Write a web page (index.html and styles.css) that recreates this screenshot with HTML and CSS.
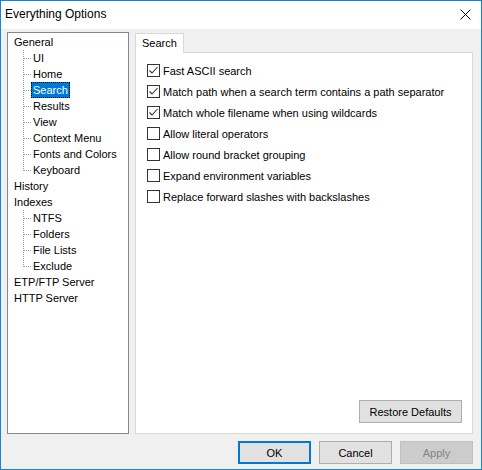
FILE: index.html
```html
<!DOCTYPE html>
<html>
<head>
<meta charset="utf-8">
<title>Everything Options</title>
<link rel="stylesheet" href="styles.css">
</head>
<body>
<div class="window">
  <div class="titlebar">
    <span class="title">Everything Options</span>
    <svg class="close" width="12" height="12" viewBox="0 0 12 12"><path d="M0.5 0.5 L10.5 10.5 M10.5 0.5 L0.5 10.5" stroke="#000" stroke-width="1" fill="none"/></svg>
  </div>
  <div class="client">
    <div class="main">
      <div class="tree">
        <div class="item root"><span>General</span></div>
        <div class="item child"><span>UI</span></div>
        <div class="item child"><span>Home</span></div>
        <div class="item child"><span class="sel">Search</span></div>
        <div class="item child"><span>Results</span></div>
        <div class="item child"><span>View</span></div>
        <div class="item child"><span>Context Menu</span></div>
        <div class="item child"><span>Fonts and Colors</span></div>
        <div class="item child last"><span>Keyboard</span></div>
        <div class="item root"><span>History</span></div>
        <div class="item root"><span>Indexes</span></div>
        <div class="item child"><span>NTFS</span></div>
        <div class="item child"><span>Folders</span></div>
        <div class="item child"><span>File Lists</span></div>
        <div class="item child last"><span>Exclude</span></div>
        <div class="item root"><span>ETP/FTP Server</span></div>
        <div class="item root"><span>HTTP Server</span></div>
      </div>
      <div class="right">
        <div class="tab">Search</div>
        <div class="panel">
          <div class="options">
            <label class="opt"><span class="box checked"><svg width="11" height="11" viewBox="0 0 11 11"><path d="M1.5 5.5 L4 8 L9.5 2" stroke="#333" stroke-width="1.1" fill="none"/></svg></span>Fast ASCII search</label>
            <label class="opt"><span class="box checked"><svg width="11" height="11" viewBox="0 0 11 11"><path d="M1.5 5.5 L4 8 L9.5 2" stroke="#333" stroke-width="1.1" fill="none"/></svg></span>Match path when a search term contains a path separator</label>
            <label class="opt"><span class="box checked"><svg width="11" height="11" viewBox="0 0 11 11"><path d="M1.5 5.5 L4 8 L9.5 2" stroke="#333" stroke-width="1.1" fill="none"/></svg></span>Match whole filename when using wildcards</label>
            <label class="opt"><span class="box"></span>Allow literal operators</label>
            <label class="opt"><span class="box"></span>Allow round bracket grouping</label>
            <label class="opt"><span class="box"></span>Expand environment variables</label>
            <label class="opt"><span class="box"></span>Replace forward slashes with backslashes</label>
          </div>
          <div class="panel-foot">
            <button class="btn restore">Restore Defaults</button>
          </div>
        </div>
      </div>
    </div>
    <div class="buttons">
      <button class="btn ok">OK</button>
      <button class="btn">Cancel</button>
      <button class="btn disabled">Apply</button>
    </div>
  </div>
</div>
</body>
</html>
```

FILE: styles.css
```css
* { box-sizing: border-box; }
html, body { margin: 0; padding: 0; background: #f0f0f0; }
body {
  font-family: "Liberation Sans", Arial, sans-serif;
  font-size: 11px;
  color: #000;
}
.window {
  width: 482px;
  height: 470px;
  border: 1px solid #1883d7;
  background: #f0f0f0;
  display: flex;
  flex-direction: column;
}
.titlebar {
  height: 28px;
  background: #fff;
  display: flex;
  align-items: center;
  justify-content: space-between;
  padding: 0 9px 2px 4px;
}
.title { font-size: 12px; }
.close { display: block; margin-top: 1px; }
.client {
  flex: 1;
  display: flex;
  flex-direction: column;
  padding: 3px 8px 0 6px;
}
.main {
  display: flex;
  gap: 6px;
  height: 402px;
}
.tree {
  width: 122px;
  height: 402px;
  background: #fff;
  border: 1px solid #828790;
  padding-top: 1px;
}
.item {
  height: 16px;
  line-height: 16px;
  white-space: nowrap;
}
.item span { display: inline-block; padding: 0 2px; height: 16px; }
.root { padding-left: 4px; }
.child {
  padding-left: 23px;
  background:
    repeating-linear-gradient(to right, #a0a0a0 0 1px, transparent 1px 2px) 16px 8px / 7px 1px no-repeat,
    repeating-linear-gradient(to bottom, #a0a0a0 0 1px, transparent 1px 2px) 15px 0 / 1px 100% no-repeat;
}
.child.last {
  background:
    repeating-linear-gradient(to right, #a0a0a0 0 1px, transparent 1px 2px) 16px 8px / 7px 1px no-repeat,
    repeating-linear-gradient(to bottom, #a0a0a0 0 1px, transparent 1px 2px) 15px 0 / 1px 9px no-repeat;
}
.sel {
  background: #0078d7;
  color: #fff;
  outline: 1px dotted #000;
  outline-offset: -1px;
}
.right {
  width: 338px;
  display: flex;
  flex-direction: column;
  padding-top: 1px;
}
.tab {
  align-self: flex-start;
  width: 49px;
  height: 20px;
  background: #fff;
  border: 1px solid #d9d9d9;
  border-bottom: none;
  padding-left: 6px;
  line-height: 18px;
  margin-bottom: -1px;
  position: relative;
  z-index: 1;
}
.panel {
  height: 382px;
  background: #fff;
  border: 1px solid #d9d9d9;
  display: flex;
  flex-direction: column;
  justify-content: space-between;
  padding: 7px 10px 10px 11px;
}
.options { display: flex; flex-direction: column; }
.opt {
  display: flex;
  align-items: center;
  height: 21px;
  white-space: nowrap;
}
.box {
  width: 13px;
  height: 13px;
  border: 1px solid #333;
  background: #fff;
  margin-right: 3px;
  display: flex;
  align-items: center;
  justify-content: center;
  flex: none;
}
.box svg { display: block; }
.panel-foot { display: flex; justify-content: flex-end; }
.btn {
  font-family: inherit;
  font-size: 11px;
  color: #000;
  background: #e1e1e1;
  border: 1px solid #adadad;
  height: 23px;
  width: 73px;
  padding: 0;
  margin: 0;
}
.restore { width: 103px; }
.buttons {
  display: flex;
  justify-content: flex-end;
  gap: 8px;
  margin-top: 7px;
}
.ok { border: 2px solid #0078d7; }
.disabled { background: #cccccc; border-color: #bfbfbf; color: #838383; }
```
